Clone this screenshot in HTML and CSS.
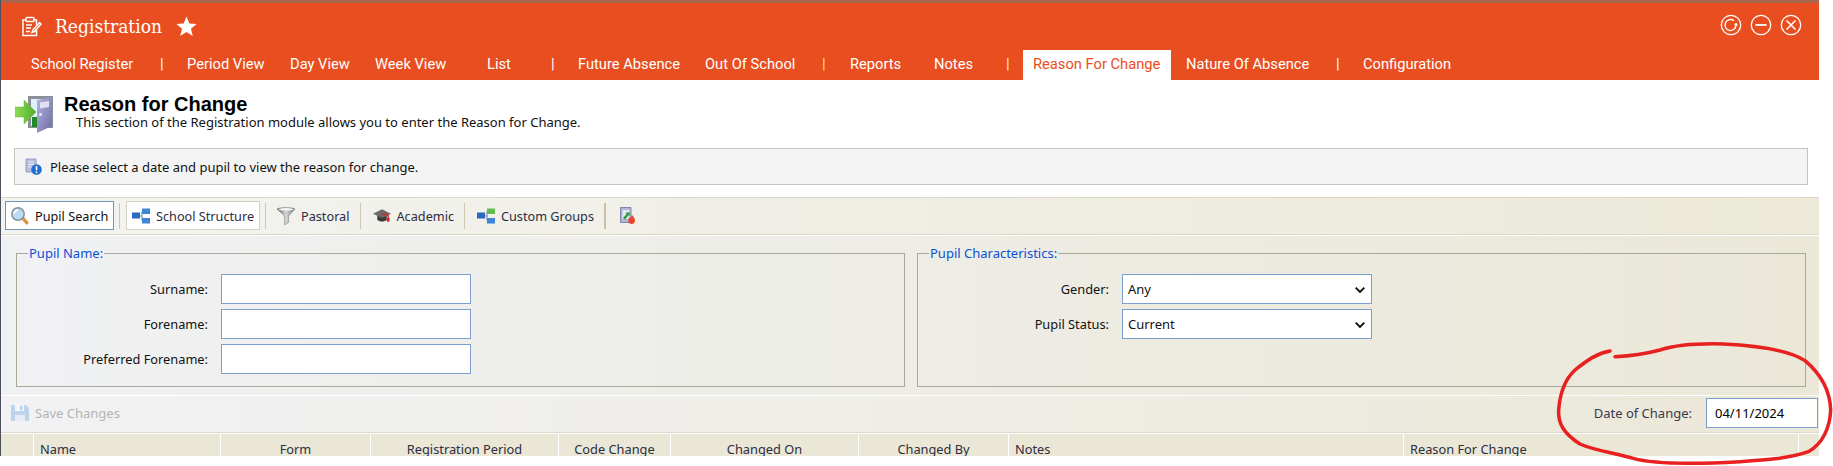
FILE: index.html
```html
<!DOCTYPE html>
<html lang="en">
<head>
<meta charset="utf-8">
<title>Registration - Reason for Change</title>
<link rel="stylesheet" href="styles.css">
</head>
<body>
<div class="app">
  <header class="titlebar">
    <svg class="note-icon" viewBox="0 0 22 22" fill="none" stroke="#fff" stroke-width="1.5"><path d="M14 5h2.500v5M6 5H3v15.500h13.500V15"/><rect x="6" y="2.500" width="8" height="4" rx="1"/><path d="M6 10h6M6 13h5M6 16.500h4"/><path d="M13 15l-1 2.500 2.500-1L21 9l-1.500-1.500z"/></svg>
    <h1 class="app-title">Registration</h1>
    <svg class="star-icon" viewBox="0 0 24 24" fill="#fff"><path d="M12 .5l3.200 8 8.400.6-6.500 5.400 2.100 8.400L12 18.300l-7.200 4.600 2.100-8.400L.4 9.100l8.400-.6z"/></svg>
    <div class="win-buttons">
      <svg class="win-icon" viewBox="0 0 22 22" fill="none" stroke="#fff" stroke-width="1.300"><circle cx="11" cy="11" r="9.700"/><path d="M16 11a5.500 5.500 0 1 1-2-4.200"/><circle cx="16" cy="10.500" r="1.500" fill="#fff" stroke="none"/></svg>
      <svg class="win-icon" viewBox="0 0 22 22" fill="none" stroke="#fff" stroke-width="1.300"><circle cx="11" cy="11" r="9.700"/><path d="M5.500 11h11" stroke-width="1.800"/></svg>
      <svg class="win-icon" viewBox="0 0 22 22" fill="none" stroke="#fff" stroke-width="1.300"><circle cx="11" cy="11" r="9.700"/><path d="M6.500 6.500l9 9M15.500 6.500l-9 9" stroke-width="1.500"/></svg>
    </div>
  </header>
  <nav class="nav">
    <a>School Register</a><span class="sep">|</span>
    <a>Period View</a><a>Day View</a><a>Week View</a><a>List</a><span class="sep">|</span>
    <a>Future Absence</a><a>Out Of School</a><span class="sep gold">|</span>
    <a>Reports</a><a>Notes</a><span class="sep cream">|</span>
    <a class="active">Reason For Change</a><a>Nature Of Absence</a><span class="sep">|</span>
    <a>Configuration</a>
  </nav>

  <section class="page-head">
    <svg class="door-icon" viewBox="0 0 38 38">
      <defs>
        <linearGradient id="doorG" x1="0" x2="1" y1="0" y2="1"><stop offset="0" stop-color="#b4b4dc"/><stop offset="1" stop-color="#6d6da8"/></linearGradient>
        <linearGradient id="arrowG" x1="0" x2="1"><stop offset="0" stop-color="#8fdc5a"/><stop offset="1" stop-color="#4fae28"/></linearGradient>
      </defs>
      <path d="M13 1h25v32H13z" fill="#8b8f97"/>
      <path d="M16 4h14v27H16z" fill="#dff0fb"/>
      <path d="M17 22h9v10h-9z" fill="#1f8a2a"/>
      <path d="M22 5l15-3v29l-15 7z" fill="url(#doorG)"/>
      <path d="M25 7.500l9-1.500v6l-9 1.500z" fill="#dfe0f2"/>
      <circle cx="25.500" cy="19.500" r="1.400" fill="#eeeeff"/>
      <path d="M0 12h9V5l12 12-12 12v-7H0z" fill="url(#arrowG)" stroke="#67b93b" stroke-width=".5"/>
    </svg>
    <div class="head-text">
      <h2 class="head-title">Reason for Change</h2>
      <p class="head-sub">This section of the Registration module allows you to enter the Reason for Change.</p>
    </div>
  </section>

  <div class="info-box">
    <svg class="info-icon" viewBox="0 0 17 17">
      <path d="M1 1h10v13H1z" fill="#b8bedc" stroke="#8c93b8" stroke-width=".8"/>
      <path d="M3 4h6M3 6.500h6M3 9h4" stroke="#e9ebf7"/>
      <circle cx="11.500" cy="11.500" r="5.300" fill="#1f6fd0"/>
      <path d="M11.500 8v4.200" stroke="#fff" stroke-width="1.600"/>
      <circle cx="11.500" cy="14.200" r=".9" fill="#fff"/>
    </svg>
    <span>Please select a date and pupil to view the reason for change.</span>
  </div>

  <div class="toolbar">
    <button class="tool tool-on">
      <svg class="tool-icon" viewBox="0 0 18 18"><path d="M10 11.500l2.500-2 5.500 6.300-2.500 2.200z" fill="#e0913c"/><circle cx="7" cy="7" r="6.200" fill="#b9dcf2" stroke="#87929c" stroke-width="1.500"/><path d="M3.300 6.500a4 4 0 0 1 3.400-3.400" stroke="#fff" stroke-width="1.600" fill="none"/></svg>
      <span>Pupil Search</span>
    </button>
    <i class="tool-sep"></i>
    <button class="tool tool-soft">
      <svg class="tool-icon" viewBox="0 0 18 18"><path d="M7 9h3M10 4.500h2M10 13.500h2M10 4.500v9" stroke="#7f95ad" stroke-width="1.200" fill="none"/><rect x="0" y="5.500" width="8" height="6" fill="#2a68c0"/><rect x="10" y="1.500" width="8" height="5.500" fill="#3f86d6"/><rect x="10" y="11" width="8" height="5.500" fill="#3f86d6"/></svg>
      <span>School Structure</span>
    </button>
    <i class="tool-sep"></i>
    <button class="tool">
      <svg class="tool-icon" viewBox="0 0 18 18"><defs><linearGradient id="funG" x1="0" x2="1"><stop offset="0" stop-color="#5f5f5f"/><stop offset=".5" stop-color="#d8d8d8"/><stop offset="1" stop-color="#6f6f6f"/></linearGradient></defs><path d="M0 2c3-2 15-2 18 0l-6.500 7v6.500L7.500 18V9z" fill="url(#funG)" stroke="#777" stroke-width=".5"/><ellipse cx="9" cy="2.300" rx="7.500" ry="1.300" fill="#f3f3f3"/></svg>
      <span>Pastoral</span>
    </button>
    <i class="tool-sep"></i>
    <button class="tool tool-nudge">
      <svg class="tool-icon" viewBox="0 0 19 18"><path d="M4.500 7.500h10V13c-2 2.500-8 2.500-10 0z" fill="#3b3b3b"/><path d="M0 6.500L9.500 2 19 6.500 9.500 11z" fill="#6a6a6a"/><path d="M9.500 6.500l6.500 1.500v6" stroke="#d5281c" stroke-width="1.500" fill="none"/><rect x="14.500" y="11" width="3" height="4" fill="#d5281c"/></svg>
      <span>Academic</span>
    </button>
    <i class="tool-sep"></i>
    <button class="tool tool-nudge">
      <svg class="tool-icon" viewBox="0 0 18 18"><path d="M7 9h3M10 4.500h2M10 13.500h2M10 4.500v9" stroke="#7f95ad" stroke-width="1.200" fill="none"/><rect x="0" y="5.500" width="8" height="6" fill="#2a68c0"/><rect x="10" y="1.500" width="8" height="5.500" fill="#5fbf4a"/><rect x="10" y="11" width="8" height="5.500" fill="#3f86d6"/></svg>
      <span>Custom Groups</span>
    </button>
    <i class="tool-sep tool-sep-thick"></i>
    <svg class="report-icon" viewBox="0 0 15 17"><path d="M.5.500h10.500v15H.500z" fill="#aeb5d6" stroke="#7f86ad"/><path d="M2.500 3h7v9h-7z" fill="#e4e7f4"/><path d="M3 11l3.500-4-1.200-1L9.500 5l.3 4.200-1.200-1-3.500 4.300z" fill="#2f9e3a"/><path d="M12 8c1.800 2 3 3.800 3 5.500a3.400 3.400 0 0 1-6.800 0c0-1.500.8-2.300 1.400-3.500.4.500.8.800 1 1.300.4-1 .6-2 1.400-3.300z" fill="#e8452a"/></svg>
  </div>

  <div class="panel">
    <fieldset class="group">
      <legend>Pupil Name:</legend>
      <div class="fields">
        <label for="surname">Surname:</label><input id="surname" class="field" type="text">
        <label for="forename">Forename:</label><input id="forename" class="field" type="text">
        <label for="preferred">Preferred Forename:</label><input id="preferred" class="field" type="text">
      </div>
    </fieldset>
    <fieldset class="group">
      <legend>Pupil Characteristics:</legend>
      <div class="fields">
        <label for="gender">Gender:</label>
        <div class="select-wrap">
          <select id="gender" class="field"><option>Any</option></select>
          <svg class="chevron" viewBox="0 0 10 6" fill="none" stroke="#111" stroke-width="1.900"><path d="M.7.700L5 5l4.300-4.300"/></svg>
        </div>
        <label for="status">Pupil Status:</label>
        <div class="select-wrap">
          <select id="status" class="field"><option>Current</option></select>
          <svg class="chevron" viewBox="0 0 10 6" fill="none" stroke="#111" stroke-width="1.900"><path d="M.7.700L5 5l4.300-4.300"/></svg>
        </div>
      </div>
    </fieldset>
  </div>

  <div class="savebar">
    <svg class="save-icon" viewBox="0 0 18 18"><path d="M0 1h15l3 3v13H0z" fill="#bcd3ec"/><path d="M4 1h9v6H4z" fill="#f1f5fa"/><path d="M4 11h10v6H4z" fill="#e6edf6"/><rect x="9" y="2" width="2.500" height="4" fill="#bcd3ec"/></svg>
    <span class="save-label">Save Changes</span>
    <label class="date-label" for="doc">Date of Change:</label>
    <input id="doc" class="field date-field" type="text" value="04/11/2024">
  </div>

  <div class="grid-head">
    <div></div>
    <div class="left">Name</div>
    <div>Form</div>
    <div>Registration Period</div>
    <div>Code Change</div>
    <div>Changed On</div>
    <div>Changed By</div>
    <div class="left">Notes</div>
    <div class="left">Reason For Change</div>
    <div></div>
  </div>
</div>
<svg class="scribble" viewBox="0 0 1059 438" fill="none" stroke="#e8201f" stroke-width="10.500" stroke-linecap="round" stroke-linejoin="round"><path d="M390 93C350 100 320 122 285 150C255 178 240 215 236 270C234 310 250 340 300 372C345 392 400 398 460 415C520 432 650 432 780 425C860 420 930 415 985 395C1030 370 1050 320 1052 270C1050 210 1020 160 975 122C930 92 850 78 730 72C650 70 590 74 540 90C495 102 450 108 405 110"/></svg>
</body>
</html>
```
FILE: styles.css
```css
* { box-sizing: border-box; }
html, body { margin: 0; padding: 0; background: #fff; }
body { height: 466px; overflow: hidden; position: relative; font-family: "DejaVu Sans", sans-serif; font-size: 12px; }

.app { width: 1819px; height: 456px; overflow: hidden; border-left: 1px solid #4c4f5c; color: #222; }

.titlebar { height: 50px; border-top: 3px solid #a9674d; background: #e94e20; display: flex; align-items: center; color: #fff; padding: 0 17px 1px 19px; }
.note-icon { width: 22px; height: 22px; }
.app-title { margin: 0 15px 0 13px; width: 106px; font: 400 19px/26px "DejaVu Serif Condensed", "DejaVu Serif", serif; white-space: nowrap; }
.star-icon { width: 21px; height: 21px; }
.win-buttons { margin-left: auto; margin-bottom: 2px; display: flex; gap: 8px; }
.win-icon { width: 22px; height: 22px; }

.nav { height: 30px; background: #e94e20; padding-left: 30px; display: grid; grid-template-columns: 129px 27px 103px 85px 112px 64px 27px 127px 117px 28px 84px 72px 17px 163px 150px 27px auto; align-items: stretch; font: 400 14.700px/28px Roboto, sans-serif; color: #fff; }
.nav a { white-space: nowrap; padding-bottom: 2px; }
.nav .sep { font-size: 15px; }
.nav .gold { color: #ffdf8f; }
.nav .cream { color: #ffeccc; }
.nav .active { background: #fff; color: #e94e20; width: 148px; padding-left: 10px; }

.page-head { height: 68px; padding: 14px 0 0 14px; display: flex; align-items: flex-start; gap: 11px; background: #fff; }
.door-icon { width: 38px; height: 38px; margin-top: 1px; }
.head-title { margin: 0; font: 700 20px/20px "Liberation Sans", sans-serif; color: #000; }
.head-sub { margin: 0 0 0 12px; font: 400 13px/16px "Noto Sans", sans-serif; color: #111; }

.info-box { margin-left: 13px; width: 1794px; height: 37px; border: 1px solid #c4c4c4; background: #f4f4f4; display: flex; align-items: center; gap: 8px; padding-left: 10px; color: #111; font: 400 13px/16px "Noto Sans", sans-serif; }
.info-icon { width: 17px; height: 17px; }

.toolbar { margin-top: 12px; height: 38px; border-top: 1px solid #ddd8c4; border-bottom: 1px solid #ddd8c4; background: linear-gradient(90deg, #f3f3f1, #ece9d8); display: flex; align-items: flex-start; padding: 3px 0 0 4px; font: 400 12.700px/16px "Noto Sans", sans-serif; color: #2d2d40; }
.tool { height: 29px; border: 1px solid transparent; background: transparent; display: flex; align-items: center; gap: 6px; padding: 0 4px 0 5px; font: inherit; color: inherit; white-space: nowrap; }
.tool-on { background: #fff; border-color: #6f93b5; color: #111; width: 109px; }
.tool-soft { background: #fff; border-color: #d6d2bf; width: 134px; margin-left: 1px; }
.tool-nudge { margin-left: 1px; }
.tool-icon { width: 18px; height: 18px; flex: none; }
.tool-sep { width: 1px; height: 26px; margin: 2px 5px 0; background: #cfc9b2; flex: none; }
.tool-sep-thick { width: 2px; background: #c9c2a8; margin-right: 14px; }
.report-icon { width: 15px; height: 17px; margin-top: 6px; }

.panel { height: 161px; border-top: 1px solid #fff; border-bottom: 1px solid #fff; padding: 8px 13px 0 15px; display: flex; gap: 12px; background: linear-gradient(90deg, #f0f1f3, #ebe8d8); }
.group { flex: 1; margin: 0; height: 143px; min-width: 0; border: 1px solid #a9a99b; padding: 0; }
.group legend { margin-left: 11px; padding: 0 1px; color: #0b50d8; font: 400 13px/18px "Noto Sans", sans-serif; }
.fields { display: grid; grid-template-columns: 191px 250px; column-gap: 13px; row-gap: 5px; padding-top: 12px; font: 400 12.800px/16px "Noto Sans", sans-serif; color: #111; align-items: center; }
.fields label { text-align: right; }
.field { display: block; height: 30px; width: 100%; border: 1px solid #7c9fd0; background: #fff; font: 400 13px "Noto Sans", sans-serif; color: #111; border-radius: 0; padding: 0 5px; appearance: none; }
.select-wrap { position: relative; }
.chevron { position: absolute; right: 7px; top: 13px; width: 10px; height: 6px; }

.savebar { height: 37px; background: linear-gradient(90deg, #f2f2f4, #ebe8d8); border-bottom: 1px solid #dcd9cc; display: flex; align-items: center; padding: 0 1px 2px 10px; }
.save-icon { width: 18px; height: 18px; }
.save-label { margin-left: 6px; color: #b4b4b4; font: 400 13px/16px "Noto Sans", sans-serif; }
.date-label { margin-left: auto; color: #3a3a50; font: 400 13px/16px "Noto Sans", sans-serif; }
.date-field { width: 112px; margin-left: 14px; padding-left: 8px; color: #000; }

.grid-head { height: 23px; background: #ebe7d6; border-top: 1px solid #fff; display: grid; grid-template-columns: 33px 187px 150px 188px 112px 188px 150px 395px 395px 19px; font: 400 12.800px/30px "Noto Sans", sans-serif; color: #2d2d40; text-align: center; overflow: hidden; }
.grid-head > div { border-right: 1px solid #fff; height: 23px; }
.grid-head > div:last-child { border-right: 0; }
.grid-head .left { text-align: left; padding-left: 6px; }

.scribble { position: absolute; left: 1480px; top: 320px; width: 353px; height: 146px; }
```
